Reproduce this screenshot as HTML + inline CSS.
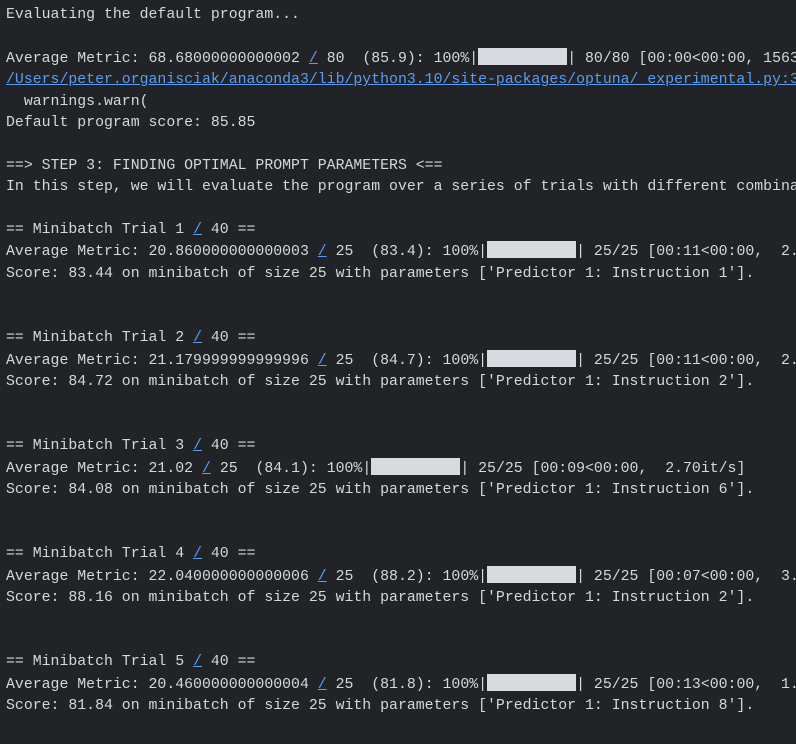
<!DOCTYPE html>
<html><head><meta charset="utf-8"><style>
html,body{margin:0;padding:0;background:#212327;width:796px;height:744px;overflow:hidden}
pre{margin:0;padding:5px 0 0 6px;font-family:"Liberation Mono",monospace;font-size:14.85px;line-height:21.4px;color:#d5d7db;white-space:pre}
a{color:#5b9cf2;text-decoration:underline}
.b{display:inline-block;width:10ch;height:17px;background:#d8dadf;vertical-align:-3px}
</style></head><body><pre>Evaluating the default program...

Average Metric: 68.68000000000002 <a>/</a> 80  (85.9): 100%|<span class="b"></span>| 80/80 [00:00&lt;00:00, 1563
<a>/Users/peter.organisciak/anaconda3/lib/python3.10/site-packages/optuna/_experimental.py:3</a>
  warnings.warn(
Default program score: 85.85

==&gt; STEP 3: FINDING OPTIMAL PROMPT PARAMETERS &lt;==
In this step, we will evaluate the program over a series of trials with different combina

== Minibatch Trial 1 <a>/</a> 40 ==
Average Metric: 20.860000000000003 <a>/</a> 25  (83.4): 100%|<span class="b"></span>| 25/25 [00:11&lt;00:00,  2.
Score: 83.44 on minibatch of size 25 with parameters ['Predictor 1: Instruction 1'].


== Minibatch Trial 2 <a>/</a> 40 ==
Average Metric: 21.179999999999996 <a>/</a> 25  (84.7): 100%|<span class="b"></span>| 25/25 [00:11&lt;00:00,  2.
Score: 84.72 on minibatch of size 25 with parameters ['Predictor 1: Instruction 2'].


== Minibatch Trial 3 <a>/</a> 40 ==
Average Metric: 21.02 <a>/</a> 25  (84.1): 100%|<span class="b"></span>| 25/25 [00:09&lt;00:00,  2.70it/s]
Score: 84.08 on minibatch of size 25 with parameters ['Predictor 1: Instruction 6'].


== Minibatch Trial 4 <a>/</a> 40 ==
Average Metric: 22.040000000000006 <a>/</a> 25  (88.2): 100%|<span class="b"></span>| 25/25 [00:07&lt;00:00,  3.
Score: 88.16 on minibatch of size 25 with parameters ['Predictor 1: Instruction 2'].


== Minibatch Trial 5 <a>/</a> 40 ==
Average Metric: 20.460000000000004 <a>/</a> 25  (81.8): 100%|<span class="b"></span>| 25/25 [00:13&lt;00:00,  1.
Score: 81.84 on minibatch of size 25 with parameters ['Predictor 1: Instruction 8'].
</pre></body></html>
